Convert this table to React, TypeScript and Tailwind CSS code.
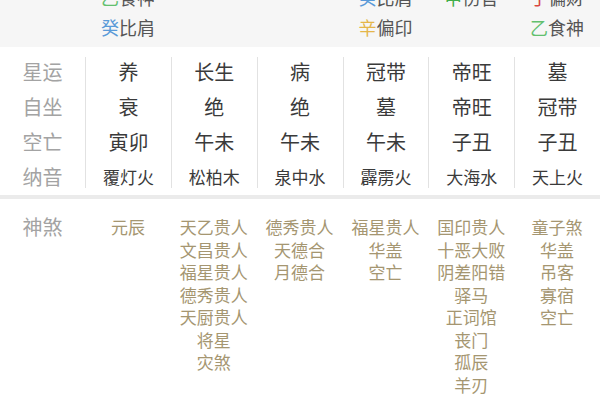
const stemColor: Record<string, string> = {
  乙: "text-[#62c06e]",
  甲: "text-[#3fae4a]",
  癸: "text-[#5a9ad8]",
  辛: "text-[#e5b64a]",
  丁: "text-[#d9463f]",
};

const topRows: string[][] = [
  ["乙食神", "癸比肩"],
  [],
  [],
  ["癸比肩", "辛偏印"],
  ["甲伤官"],
  ["丁偏财", "乙食神"],
];

const labels = ["星运", "自坐", "空亡", "纳音"];

const table: string[][] = [
  ["养", "衰", "寅卯", "覆灯火"],
  ["长生", "绝", "午未", "松柏木"],
  ["病", "绝", "午未", "泉中水"],
  ["冠带", "墓", "午未", "霹雳火"],
  ["帝旺", "帝旺", "子丑", "大海水"],
  ["墓", "冠带", "子丑", "天上火"],
];

const shensha: string[][] = [
  ["元辰"],
  ["天乙贵人", "文昌贵人", "福星贵人", "德秀贵人", "天厨贵人", "将星", "灾煞"],
  ["德秀贵人", "天德合", "月德合"],
  ["福星贵人", "华盖", "空亡"],
  ["国印贵人", "十恶大败", "阴差阳错", "驿马", "正词馆", "丧门", "孤辰", "羊刃"],
  ["童子煞", "华盖", "吊客", "寡宿", "空亡"],
];

function StemText({ text }: { text: string }) {
  const stem = text.slice(0, 1);
  return (
    <div>
      <span className={stemColor[stem]}>{stem}</span>
      <span className="text-[#555]">{text.slice(1)}</span>
    </div>
  );
}

export default function App() {
  return (
    <div className="w-[600px] h-[400px] overflow-hidden bg-white font-['Noto_Sans_CJK_SC',sans-serif]">
      {/* 藏干 strip, cut at the top */}
      <div className="h-[47px] overflow-hidden bg-[#f6f6f6]">
        <div className="-mt-[18px] grid grid-cols-[85px_repeat(6,minmax(0,1fr))] text-[18px] leading-[30px]">
          <div />
          {topRows.map((col, i) => (
            <div key={i} className="flex flex-col items-center">
              {col.map((t) => (
                <StemText key={t} text={t} />
              ))}
            </div>
          ))}
        </div>
      </div>

      {/* 星运 / 自坐 / 空亡 / 纳音 */}
      <div className="h-[148px] grid grid-cols-[85px_repeat(6,minmax(0,1fr))]">
        <div className="flex flex-col items-center pt-[6.5px] text-[20px] leading-[35px] text-[#a3a3a3]">
          {labels.map((l) => (
            <div key={l}>{l}</div>
          ))}
        </div>
        {table.map((col, i) => (
          <div key={i} className="self-start mt-[10px] h-[131px] border-l border-[#e2e2e2]">
            <div className="-mt-[3.5px] flex flex-col items-center text-[20px] leading-[35px] text-[#3a3a3a]">
              {col.map((v, j) => (
                <div key={j} className={j === 3 ? "text-[17px]" : ""}>
                  {v}
                </div>
              ))}
            </div>
          </div>
        ))}
      </div>

      <div className="h-[4px] bg-[#ebebeb]" />

      {/* 神煞 */}
      <div className="grid grid-cols-[85px_repeat(6,minmax(0,1fr))] pt-[17px] leading-[22.5px]">
        <div className="flex justify-center text-[20px] text-[#a3a3a3]">神煞</div>
        {shensha.map((col, i) => (
          <div key={i} className="flex flex-col items-center text-[17px] text-[#a59671]">
            {col.map((s, j) => (
              <div key={j}>{s}</div>
            ))}
          </div>
        ))}
      </div>
    </div>
  );
}
